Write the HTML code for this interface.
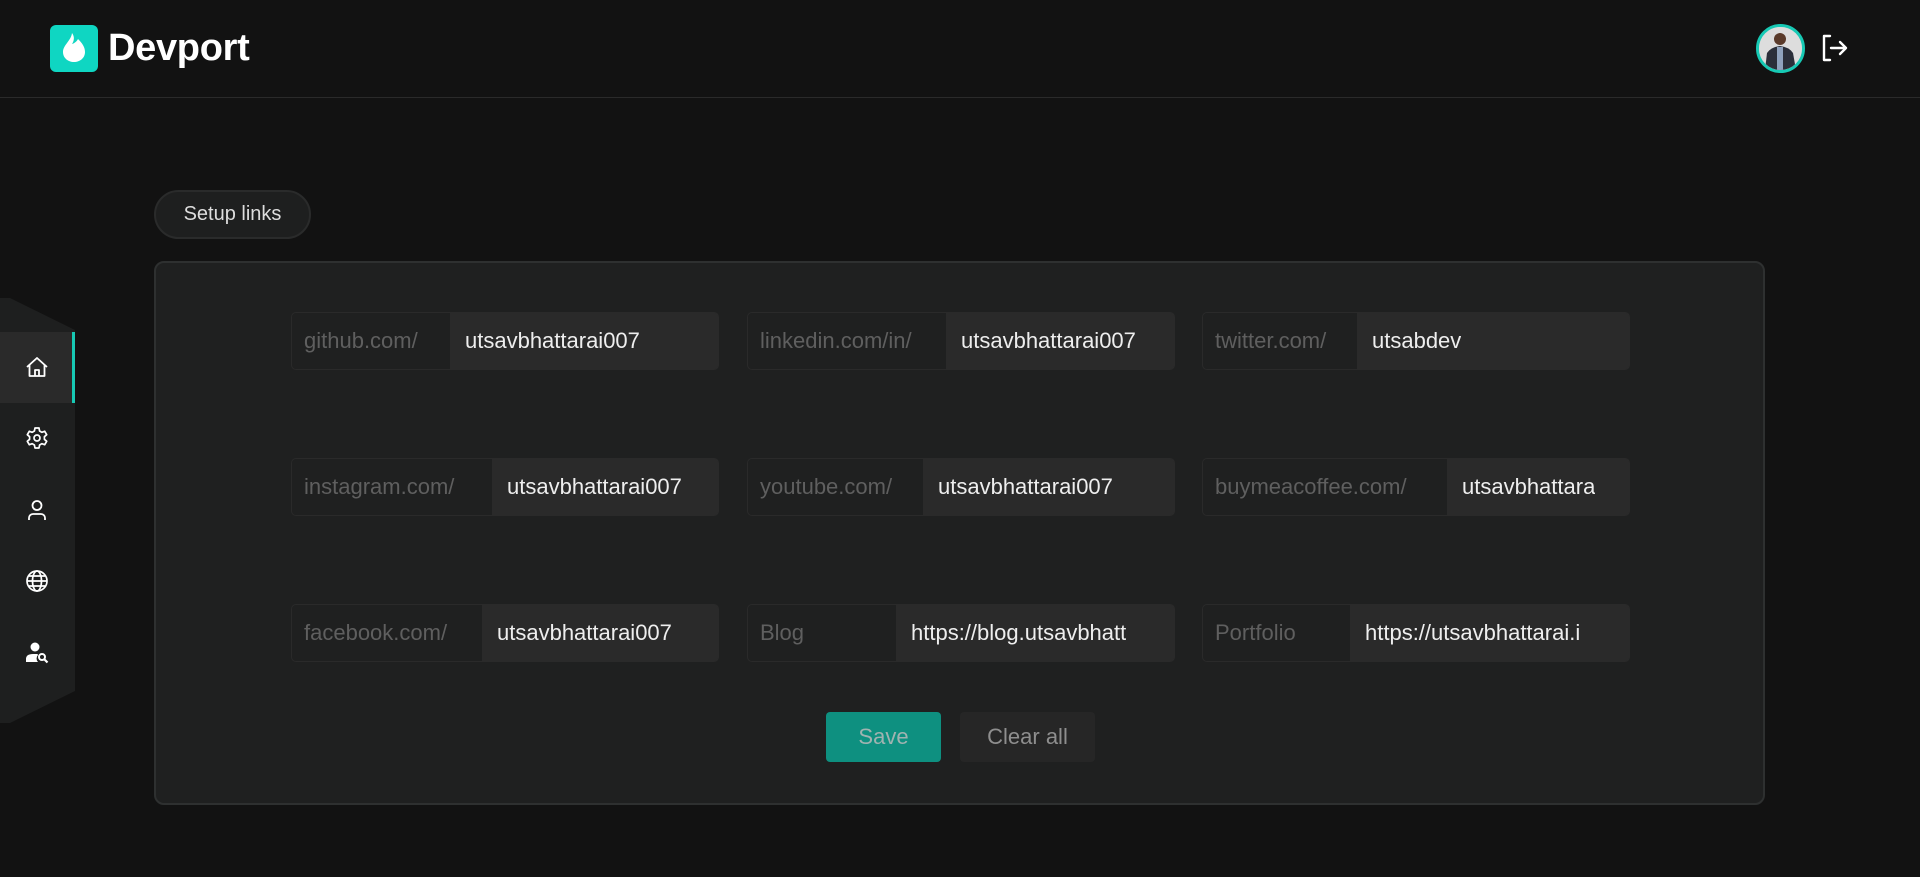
<!DOCTYPE html>
<html><head><meta charset="utf-8"><style>
*{box-sizing:border-box;margin:0;padding:0}
body{width:1920px;height:877px;background:#121212;font-family:"Liberation Sans",sans-serif;position:relative;overflow:hidden;color:#eee}
.hdr{position:absolute;left:0;top:0;width:1920px;height:98px;border-bottom:1px solid #2a2a2a}
.logo{position:absolute;left:50px;top:25px;width:48px;height:47px;background:#0fd6c2;border-radius:6px}
.brand{position:absolute;left:108px;top:27px;font-size:38px;font-weight:bold;color:#fff;letter-spacing:-0.3px}
.av{position:absolute;left:1756px;top:24px;width:49px;height:49px;border-radius:50%;border:3px solid #17c9b4;background:#d8d8d8;overflow:hidden}
.side{position:absolute;left:0;top:298px;width:75px;height:425px;background:#1e1f1f;clip-path:polygon(0 0,10px 0,75px 32px,75px 393px,10px 425px,0 425px)}
.act{position:absolute;left:0;top:332px;width:75px;height:71px;background:#2a2a2a;border-right:3px solid #17c9b4}
.ic{position:absolute;left:25px;width:24px;height:24px}
.pill{position:absolute;left:154px;top:190px;width:157px;height:49px;border:2px solid #2a2b2b;background:#1e1f1f;border-radius:25px;font-size:20px;color:#ddd;line-height:45px;text-align:center}
.card{position:absolute;left:154px;top:261px;width:1611px;height:544px;background:#1f2020;border:2px solid #2e3030;border-radius:10px}
.in{position:absolute;width:428px;height:58px;border-radius:5px;background:#2a2a2a;display:flex;overflow:hidden;border:1px solid #2a2a2a}
.in .p{background:#1f2020;color:#5f5f5f;font-size:22px;line-height:56px;padding-left:12px;flex:none}
.in .v{color:#eee;font-size:22px;line-height:56px;padding-left:15px;white-space:nowrap;overflow:hidden}
.btn{position:absolute;top:712px;height:50px;border-radius:4px;font-size:22px;line-height:50px;text-align:center}
</style></head><body>
<div class="hdr">
<div class="logo"><svg width="48" height="47" viewBox="0 0 48 47"><path d="M22 8c3 4 2 8 0 11c3-1 5-3 6-5c4 4 7 8 7 13c0 6-5 10-11 10s-11-4-11-10c0-7 8-11 9-19z" fill="#fff"/></svg></div>
<div class="brand">Devport</div>
<div class="av"><svg width="43" height="43" viewBox="0 0 43 43"><rect width="43" height="43" fill="#ddd"/><circle cx="21" cy="12" r="6" fill="#5a3a2a"/><path d="M6 43 L8 26 Q12 20 21 19 Q30 20 34 26 L37 43z" fill="#2b2f3a"/><path d="M18 20 L24 20 L24 43 L18 43z" fill="#8fa2bd"/></svg></div>
<svg style="position:absolute;left:1821px;top:34px" width="28" height="28" viewBox="0 0 28 28" fill="none" stroke="#fff" stroke-width="2.4" stroke-linecap="round" stroke-linejoin="round"><path d="M9 2H3v24h6"/><path d="M10 14h15M19 8l6 6-6 6"/></svg>
</div>
<div class="side"></div>
<div class="act"></div>
<svg class="ic" style="top:355px" viewBox="0 0 24 24" fill="none" stroke="#fff" stroke-width="1.8" stroke-linejoin="round"><path d="M2 12L12 3l10 9M4.5 10v11h15V10M10 21v-6h4v6"/></svg>
<svg class="ic" style="top:426px" viewBox="0 0 24 24" fill="none" stroke="#fff" stroke-width="1.7"><circle cx="12" cy="12" r="3"/><path d="M10 2h4l.6 3 2.2 1.3 2.9-1 2 3.4-2.3 2v2.6l2.3 2-2 3.4-2.9-1L14.6 19 14 22h-4l-.6-3-2.2-1.3-2.9 1-2-3.4 2.3-2v-2.6l-2.3-2 2-3.4 2.9 1L9.4 5z" stroke-linejoin="round"/></svg>
<svg class="ic" style="top:498px" viewBox="0 0 24 24" fill="none" stroke="#fff" stroke-width="1.8"><circle cx="12" cy="7.5" r="4.5"/><path d="M4 22v-2a4 4 0 0 1 4-4h8a4 4 0 0 1 4 4v2"/></svg>
<svg class="ic" style="top:569px" viewBox="0 0 24 24" fill="none" stroke="#fff" stroke-width="1.7"><circle cx="12" cy="12" r="10"/><ellipse cx="12" cy="12" rx="4.5" ry="10"/><path d="M2 12h20M4 7h16M4 17h16"/></svg>
<svg class="ic" style="top:641px" viewBox="0 0 24 24" fill="#fff"><circle cx="10" cy="6" r="4.5"/><path d="M1 21v-3q0-5 7-5h4q1 0 1 1a5 5 0 0 0 0 7z"/><circle cx="17" cy="16" r="3" fill="none" stroke="#fff" stroke-width="2"/><path d="M19 18l3.5 3.5" stroke="#fff" stroke-width="2.2"/></svg>
<div class="pill">Setup links</div>
<div class="card"></div>
<div class="in" style="left:291px;top:312px"><div class="p" style="width:158px">github.com/</div><div class="v">utsavbhattarai007</div></div>
<div class="in" style="left:747px;top:312px"><div class="p" style="width:198px">linkedin.com/in/</div><div class="v">utsavbhattarai007</div></div>
<div class="in" style="left:1202px;top:312px"><div class="p" style="width:154px">twitter.com/</div><div class="v">utsabdev</div></div>
<div class="in" style="left:291px;top:458px"><div class="p" style="width:200px">instagram.com/</div><div class="v">utsavbhattarai007</div></div>
<div class="in" style="left:747px;top:458px"><div class="p" style="width:175px">youtube.com/</div><div class="v">utsavbhattarai007</div></div>
<div class="in" style="left:1202px;top:458px"><div class="p" style="width:244px">buymeacoffee.com/</div><div class="v">utsavbhattara</div></div>
<div class="in" style="left:291px;top:604px"><div class="p" style="width:190px">facebook.com/</div><div class="v">utsavbhattarai007</div></div>
<div class="in" style="left:747px;top:604px"><div class="p" style="width:148px">Blog</div><div class="v">https://blog.utsavbhatt</div></div>
<div class="in" style="left:1202px;top:604px"><div class="p" style="width:147px">Portfolio</div><div class="v">https://utsavbhattarai.i</div></div>
<div class="btn" style="left:826px;width:115px;background:#0e9080;color:#9fb3b0">Save</div>
<div class="btn" style="left:960px;width:135px;background:#262626;color:#8e8e8e">Clear all</div>
</body></html>
